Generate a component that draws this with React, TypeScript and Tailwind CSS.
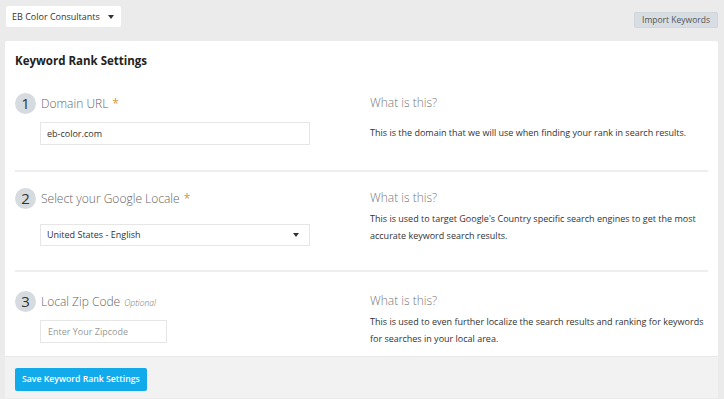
import { useState } from "react";

const font = { fontFamily: '"Open Sans", "Noto Sans", sans-serif' };

function StepBadge({ n }: { n: number }) {
  return (
    <span className="flex h-[21px] w-[21px] shrink-0 items-center justify-center rounded-full bg-[#d6dbdf] text-[15px] leading-none text-[#333]">
      {n}
    </span>
  );
}

function Caret() {
  return <span className="inline-block h-0 w-0 border-x-[3.5px] border-t-[4px] border-x-transparent border-t-[#333]" />;
}

type Section = {
  n: number;
  label: string;
  required?: boolean;
  optional?: boolean;
  help: string;
};

export default function App() {
  const [domain, setDomain] = useState("eb-color.com");
  const [zip, setZip] = useState("");

  const sections: Section[] = [
    { n: 1, label: "Domain URL", required: true, help: "This is the domain that we will use when finding your rank in search results." },
    {
      n: 2,
      label: "Select your Google Locale",
      required: true,
      help: "This is used to target Google's Country specific search engines to get the most accurate keyword search results."
    },
    {
      n: 3,
      label: "Local Zip Code",
      optional: true,
      help: "This is used to even further localize the search results and ranking for keywords for searches in your local area."
    }
  ];

  return (
    <div className="h-[399px] w-[724px] overflow-hidden bg-[#ebebeb]" style={font}>
      <div className="flex items-start justify-between pl-[6px] pr-[6px] pt-[6px]">
        <button className="flex h-[21px] w-[115px] items-center gap-[8px] whitespace-nowrap rounded-[2px] bg-white pl-[6px] text-[9px] text-[#333]">
          EB Color Consultants
          <Caret />
        </button>
        <button className="mt-[6px] h-[16px] whitespace-nowrap rounded-[2px] border border-[#cfd6dc] bg-[#d7dde2] px-[7px] text-[8.5px] leading-none text-[#555]">
          Import Keywords
        </button>
      </div>

      <div className="ml-[5px] mt-[13px] w-[713px] rounded-[2px] bg-white">
        <div className="px-[10px] pb-[9px]">
          <h1 className="pt-[11px] text-[11.5px] font-bold leading-[18px] text-[#222]">Keyword Rank Settings</h1>

          {sections.map((s, i) => (
            <div key={s.n} className={i < sections.length - 1 ? "border-b-2 border-[#eeeeee]" : ""}>
              <div className={`grid grid-cols-[355px_1fr] ${i === 0 ? "pt-[23px] pb-[25px]" : i === 1 ? "pt-[16px] pb-[24px]" : "pt-[19px]"}`}>
                <div>
                  <div className="flex items-center gap-[5px]">
                    <StepBadge n={s.n} />
                    <span className="text-[12px] font-light text-[#666]">
                      {s.label}
                      {s.required && <span className="ml-[4px] font-normal text-[#cf9a45]">*</span>}
                      {s.optional && <span className="ml-[4px] text-[8.5px] italic text-[#777]">Optional</span>}
                    </span>
                  </div>
                  {s.n === 1 && (
                    <input
                      value={domain}
                      onChange={(e) => setDomain(e.target.value)}
                      className="ml-[25px] mt-[8px] h-[23px] w-[270px] border border-[#e6e6e6] px-[6px] text-[9px] text-[#333] outline-none"
                    />
                  )}
                  {s.n === 2 && (
                    <div className="ml-[25px] mt-[15px] flex h-[22px] w-[270px] items-center justify-between border border-[#e6e6e6] pl-[6px] pr-[10px] text-[9px] text-[#333]">
                      United States - English
                      <Caret />
                    </div>
                  )}
                  {s.n === 3 && (
                    <input
                      value={zip}
                      onChange={(e) => setZip(e.target.value)}
                      placeholder="Enter Your Zipcode"
                      className="ml-[25px] mt-[8px] h-[23px] w-[127px] border border-[#e6e6e6] px-[7px] text-[9px] text-[#333] outline-none placeholder:text-[#999]"
                    />
                  )}
                </div>
                <div className="pt-[1px]">
                  <p className="text-[12px] font-light leading-[18px] text-[#777]">What is this?</p>
                  <p className={`text-[9px] leading-[17px] text-[#333] ${s.n === 1 ? "mt-[12px]" : "mt-[3px]"}`}>{s.help}</p>
                </div>
              </div>
            </div>
          ))}
        </div>

        <div className="border-t border-[#e8e8e8] bg-[#f2f2f2] px-[10px] py-[7px]">
          <button className="h-[23px] whitespace-nowrap rounded-[2px] bg-[#11aaea] px-[7px] text-[8.7px] font-semibold text-white">
            Save Keyword Rank Settings
          </button>
        </div>
      </div>
    </div>
  );
}
